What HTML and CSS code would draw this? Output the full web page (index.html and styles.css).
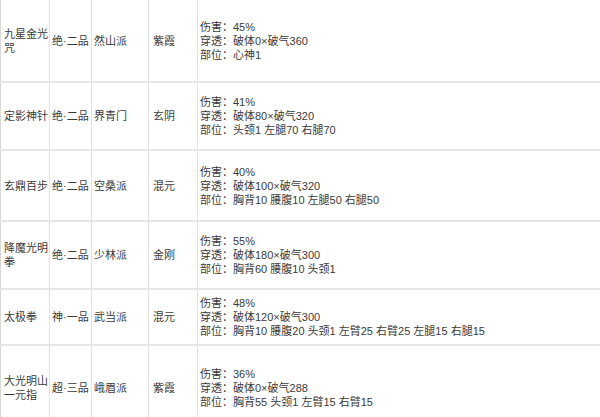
FILE: index.html
```html
<!DOCTYPE html>
<html lang="zh-CN">
<head>
<meta charset="utf-8">
<title>武学</title>
<link rel="stylesheet" href="styles.css">
</head>
<body>
<table class="grid">
  <colgroup>
    <col class="c-name"><col class="c-grade"><col class="c-sect"><col class="c-type"><col class="c-info">
  </colgroup>
  <tbody>
    <tr class="r1">
      <td class="name">九星金光咒</td><td>绝·二品</td><td>然山派</td><td class="type">紫霞</td>
      <td class="info"><div>伤害：45%</div><div>穿透：破体0×破气360</div><div>部位：心神1</div></td>
    </tr>
    <tr class="r2">
      <td class="name">定影神针</td><td>绝·二品</td><td>界青门</td><td class="type">玄阴</td>
      <td class="info"><div>伤害：41%</div><div>穿透：破体80×破气320</div><div>部位：头颈1 左腿70 右腿70</div></td>
    </tr>
    <tr class="r3">
      <td class="name">玄鼎百步</td><td>绝·二品</td><td>空桑派</td><td class="type">混元</td>
      <td class="info"><div>伤害：40%</div><div>穿透：破体100×破气320</div><div>部位：胸背10 腰腹10 左腿50 右腿50</div></td>
    </tr>
    <tr class="r4">
      <td class="name">降魔光明拳</td><td>绝·二品</td><td>少林派</td><td class="type">金刚</td>
      <td class="info"><div>伤害：55%</div><div>穿透：破体180×破气300</div><div>部位：胸背60 腰腹10 头颈1</div></td>
    </tr>
    <tr class="r5">
      <td class="name">太极拳</td><td>神·一品</td><td>武当派</td><td class="type">混元</td>
      <td class="info"><div>伤害：48%</div><div>穿透：破体120×破气300</div><div>部位：胸背10 腰腹20 头颈1 左臂25 右臂25 左腿15 右腿15</div></td>
    </tr>
    <tr class="r6">
      <td class="name">大光明山一元指</td><td>超·三品</td><td>峨眉派</td><td class="type">紫霞</td>
      <td class="info"><div>伤害：36%</div><div>穿透：破体0×破气288</div><div>部位：胸背55 头颈1 左臂15 右臂15</div></td>
    </tr>
  </tbody>
</table>
</body>
</html>
```

FILE: styles.css
```css
html, body {
  margin: 0;
  padding: 0;
  background: #ffffff;
}
body {
  font-family: "Liberation Sans", "Noto Sans CJK SC", sans-serif;
  font-size: 11px;
  line-height: 14px;
  color: #3a3a3a;
  overflow: hidden;
}
.grid {
  border-collapse: collapse;
  table-layout: fixed;
  width: 100%;
  border-left: 1px solid #d8d8d8;
}
.c-name { width: 49px; }
.c-grade { width: 42px; }
.c-sect { width: 57px; }
.c-type { width: 49px; }
.grid td {
  border-right: 1px solid #e2e2e2;
  border-bottom: 2px solid #e6e6e6;
  padding: 0 0 0 2px;
  vertical-align: middle;
  white-space: nowrap;
  overflow: hidden;
}
.grid td.name {
  padding: 0 0 0 3px;
  white-space: normal;
  word-break: break-all;
}
.grid td.type { padding-left: 4px; }
.grid td.info { border-right: none; }
.r1 td { height: 81px; }
.r2 td { height: 66px; }
.r3 td { height: 69px; }
.r4 td { height: 66px; }
.r5 td { height: 54px; }
.r6 td { height: 84px; }
```
